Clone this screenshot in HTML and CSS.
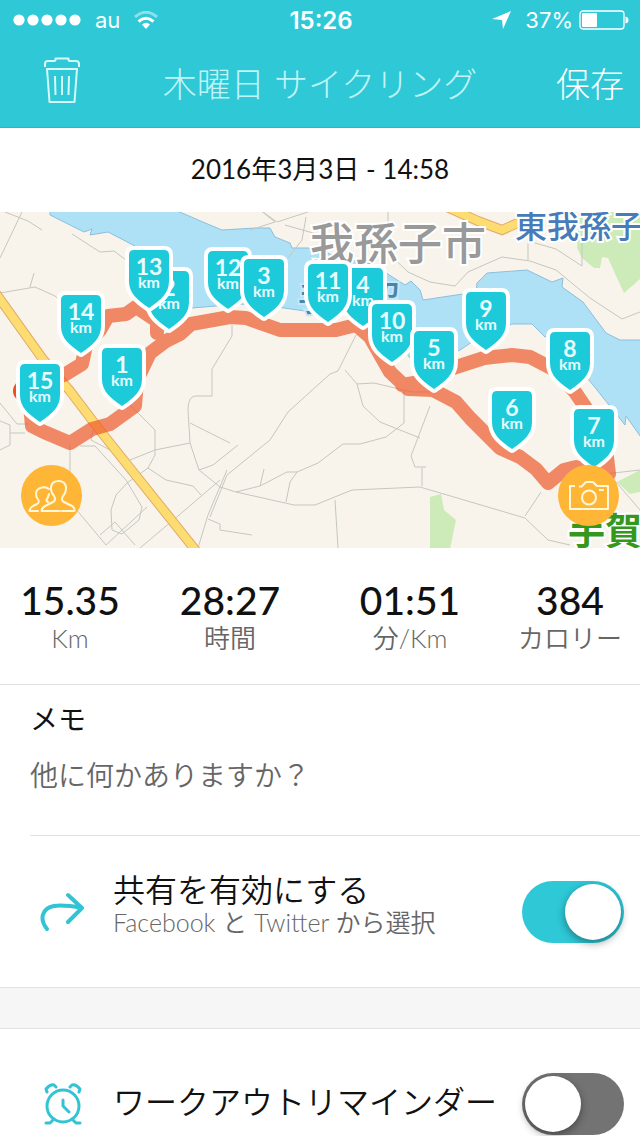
FILE: index.html
```html
<!DOCTYPE html>
<html lang="ja">
<head>
    <meta charset="utf-8">
    <meta name="viewport" content="width=device-width, initial-scale=1">
    <title>木曜日 サイクリング</title>
    <link rel="stylesheet" href="styles.css">
</head>
<body>
    <header class="header">
        <div class="status-bar">
            <div class="status-left">
                <svg width="68" height="12" viewBox="0 0 68 12" fill="#fff" aria-hidden="true">
                    <circle cx="6" cy="6" r="5.6"/><circle cx="20" cy="6" r="5.6"/><circle cx="34" cy="6" r="5.6"/><circle cx="48" cy="6" r="5.6"/><circle cx="62" cy="6" r="5.6"/>
                </svg>
                <span class="carrier">au</span>
                <svg width="24" height="18" viewBox="0 0 24 18" fill="none" stroke="#fff" stroke-width="3" aria-hidden="true">
                    <path d="M1 6Q12-3.500 23 6" stroke-opacity=".45"/>
                    <path d="M4.500 10.500Q12 4 19.500 10.500"/>
                    <path d="M8 13.500Q12 10 16 13.500L12 18z" fill="#fff" stroke="none"/>
                </svg>
            </div>
            <time class="clock">15:26</time>
            <div class="status-right">
                <svg width="19" height="18" viewBox="0 0 19 18" fill="#fff" aria-hidden="true"><path d="M19 0L11 18L10 9L0 8z"/></svg>
                <span class="percent">37%</span>
                <svg width="50" height="20" viewBox="0 0 50 20" aria-hidden="true">
                    <rect x="1" y="1" width="44" height="18" rx="3" fill="none" stroke="#fff" stroke-width="1.300"/>
                    <rect x="3" y="3" width="15" height="14" rx="1" fill="#fff"/>
                    <path d="M46.500 6.500Q49.500 7 49.500 10T46.500 13.500z" fill="#fff"/>
                </svg>
            </div>
        </div>
        <nav class="nav-bar">
            <button type="button" class="trash-btn" aria-label="削除">
                <svg width="38" height="48" viewBox="0 0 38 48" fill="none" stroke="#d5fafa" stroke-width="2" stroke-linejoin="round">
                    <path d="M2 10V7Q2 4 5 4H11Q12.500 4 12.500 2.500V1.500H25.500V2.500Q25.500 4 27 4H33Q36 4 36 7V10"/>
                    <path d="M3 12H35M4 12L6.500 45H31.500L34 12"/>
                    <path d="M12 19L12.500 38M19 19V38M26 19L25.500 38"/>
                </svg>
            </button>
            <h1 class="title">木曜日 サイクリング</h1>
            <button type="button" class="save-btn">保存</button>
        </nav>
    </header>

    <main>
        <p class="date">2016年3月3日 - 14:58</p>

        <section class="map">
            <svg class="map-canvas" viewBox="0 212 640 336" preserveAspectRatio="xMidYMid slice" role="img" aria-label="ルートマップ">
                <defs>
                    <path id="pin" d="M-15 0H15Q20 0 20 5V31C20 43 12 50 0 58C-12 50-20 43-20 31V5Q-20 0-15 0z"/>
                </defs>

                <!-- water and parks -->
                <path class="water" d="M50 205V215L84 232L92 229L90 235L108 232L135 246L165 285L192 308L240 304L277 307L305 311L350 312L385 325L410 358L440 360L460 350L475 340L512 324H532L545 337L555 335L585 375L625 425L626 416L650 450V340H620L606 333L583 302L562 287L563 278L552 282L527 270L487 273L477 283L476 292L423 300L420 290L411 281L405 285L372 264L340 258L315 248H292L290 243L275 237L270 228H255L222 230L210 225L175 210z"/>
                <path class="park" d="M580 205L577 248L582 258L594 268L600 268L602 257L608 258L617 278L624 293L640 279V205z"/>
                <path class="park" d="M430 497L441 494L444 510L456 520L450 549H430zM617 482L640 470V492L630 494z"/>

                <!-- minor roads -->
                <g class="road">
                    <path d="M5 212L28 221L42 230M22 212L0 258M0 293L35 287L55 296L65 305M30 287L34 273M72 234L100 252L114 251L126 260"/>
                    <path d="M260 210L275 222L250 230M263 212L277 222L320 208M306 217L302 240L288 258M285 225L320 235M388 210V225M385 250L408 272L430 282L455 286L468 272L502 257L530 261L556 270L590 298L622 319L640 312M528 238V260M528 241L556 249L582 266V240"/>
                    <path d="M232 325V336L212 369V396M330 374L288 412L270 440L227 475L210 517M356 335L338 371L330 374M345 370L357 384L363 406L380 422L420 438M357 384L374 383L412 392H434M404 390V423L386 437L360 444H343L318 463L297 472H287L260 486L236 492M297 472L290 482L286 502M264 469L260 486"/>
                    <path d="M220 487L236 492L294 505H315L352 490L420 487L525 518L548 540L570 545M335 500L338 548M430 406L411 456L415 467H426M422 468V486M525 516L541 492M596 475L640 470M610 475L640 510"/>
                    <path d="M0 403L17 424H28M0 421L10 425V445L0 450M10 433H25M70 445V502L106 545L147 507M80 446H95L126 480L142 507L139 520L122 534L112 530L111 510L116 495L127 483L148 468M93 430L91 440L110 450M130 460L155 450L190 443M130 405L155 430V455L148 468L166 480L193 486L201 495M212 396H195Q188 397 188 410L190 443L199 470L213 465L238 445M190 423L230 443M199 470L220 487M220 480L185 510L140 548M100 535L115 522L135 545M227 470L208 515L198 548M208 519L220 524V530L252 535"/>
                </g>

                <path class="highway-edge" d="M-8 288L42 358L70 391L98 428L197 552"/>
                <path class="highway" d="M-8 288L42 358L70 391L98 428L197 552"/>
                <path class="highway-edge" d="M440 204L478 221L502 230L520 222L550 208"/>
                <path class="highway" d="M440 204L478 221L502 230L520 222L550 208"/>

                <!-- place names -->
                <text class="place place-city" x="310" y="260">我孫子市</text>
                <text class="place place-town" x="515" y="238">東我孫子</text>
                <text class="place place-lake" x="298" y="311">手賀沼</text>
                <text class="place place-park" x="568" y="545">手賀</text>

                <!-- ride track -->
                <circle cx="24" cy="391" r="11" fill="#ee4f20"/>
                <path class="track" d="M30 405L32 426L44 432L70 443L92 429L110 424L135 406L137 380L150 353L166 341L180 334L191 324L230 317L246 318L280 330H336L356 325L370 337L390 372L408 389L433 390L456 402L470 418L500 448L520 457L536 469L548 483L564 470L576 467L609 474L607 457L594 420L575 392L555 370L530 357L512 355L484 358L450 369L420 382L402 385M157 333V321L136 307L126 314L108 316L100 330L86 345L82 364L64 375L38 385L30 405"/>

                <!-- kilometre markers -->
                <g class="pin" transform="translate(169 271)"><use href="#pin"/><text class="pin-num" y="25">2</text><text class="pin-unit" y="38">km</text></g>
                <g class="pin" transform="translate(149 250)"><use href="#pin"/><text class="pin-num" y="25">13</text><text class="pin-unit" y="38">km</text></g>
                <g class="pin" transform="translate(228 251)"><use href="#pin"/><text class="pin-num" y="25">12</text><text class="pin-unit" y="38">km</text></g>
                <g class="pin" transform="translate(264 259)"><use href="#pin"/><text class="pin-num" y="25">3</text><text class="pin-unit" y="38">km</text></g>
                <g class="pin" transform="translate(363 268)"><use href="#pin"/><text class="pin-num" y="25">4</text><text class="pin-unit" y="38">km</text></g>
                <g class="pin" transform="translate(328 264)"><use href="#pin"/><text class="pin-num" y="25">11</text><text class="pin-unit" y="38">km</text></g>
                <g class="pin" transform="translate(81 295)"><use href="#pin"/><text class="pin-num" y="25">14</text><text class="pin-unit" y="38">km</text></g>
                <g class="pin" transform="translate(486 292)"><use href="#pin"/><text class="pin-num" y="25">9</text><text class="pin-unit" y="38">km</text></g>
                <g class="pin" transform="translate(392 304)"><use href="#pin"/><text class="pin-num" y="25">10</text><text class="pin-unit" y="38">km</text></g>
                <g class="pin" transform="translate(434 331)"><use href="#pin"/><text class="pin-num" y="25">5</text><text class="pin-unit" y="38">km</text></g>
                <g class="pin" transform="translate(570 332)"><use href="#pin"/><text class="pin-num" y="25">8</text><text class="pin-unit" y="38">km</text></g>
                <g class="pin" transform="translate(122 348)"><use href="#pin"/><text class="pin-num" y="25">1</text><text class="pin-unit" y="38">km</text></g>
                <g class="pin" transform="translate(40 364)"><use href="#pin"/><text class="pin-num" y="25">15</text><text class="pin-unit" y="38">km</text></g>
                <g class="pin" transform="translate(512 391)"><use href="#pin"/><text class="pin-num" y="25">6</text><text class="pin-unit" y="38">km</text></g>
                <g class="pin" transform="translate(594 409)"><use href="#pin"/><text class="pin-num" y="25">7</text><text class="pin-unit" y="38">km</text></g>
            </svg>
            <button type="button" class="map-btn friends-btn" aria-label="友達">
                <svg width="48" height="34" viewBox="0 0 48 34" fill="none" stroke="#fff8d8" stroke-width="2" stroke-linecap="round" stroke-linejoin="round">
                    <path d="M34 32H46.500Q47 28 42 26L35 22.500Q33 20 35 17Q38.500 13 38 8Q37 2 30.500 2T23 8Q22.500 13 26 17Q28 20 26 22.500L19 26Q14 28 13.500 32H32"/>
                    <path d="M21 10Q18 7.500 14 8.500Q8 9.500 8 15Q8 18 10 20.500Q12 23 9 25L5 27Q1.500 29 1.500 32H10M21 15Q20 19 18.500 20.500Q18 22 20 23"/>
                </svg>
            </button>
            <button type="button" class="map-btn camera-btn" aria-label="写真を追加">
                <svg width="42" height="32" viewBox="0 0 42 32" fill="none" stroke="#fff8d8" stroke-width="2" stroke-linejoin="round">
                    <path d="M7 6H2V29H40V6H29L25 2H18L13.500 6.500H11"/>
                    <circle cx="21" cy="17.500" r="7"/>
                    <path d="M31 10H36"/>
                </svg>
            </button>
        </section>

        <dl class="stats">
            <div class="stat"><dd>15.35</dd><dt>Km</dt></div>
            <div class="stat"><dd>28:27</dd><dt>時間</dt></div>
            <div class="stat"><dd>01:51</dd><dt>分/Km</dt></div>
            <div class="stat"><dd>384</dd><dt>カロリー</dt></div>
        </dl>

        <section class="memo">
            <label for="memo">メモ</label>
            <textarea id="memo" rows="1" placeholder="他に何かありますか？"></textarea>
        </section>

        <section class="row row-share">
            <svg class="row-icon" width="46" height="40" viewBox="0 0 46 40" fill="none" stroke="#33c4d3" stroke-width="4" stroke-linecap="round" stroke-linejoin="round" aria-hidden="true">
                <path d="M8 37C0 27 3 16 15 14C22 13 32 14 43 16M29 3L43 16L29 30"/>
            </svg>
            <label class="row-text" for="share">
                <span class="row-title">共有を有効にする</span>
                <span class="row-sub">Facebook と Twitter から選択</span>
            </label>
            <input type="checkbox" class="switch" id="share" checked>
        </section>

        <div class="divider"></div>

        <section class="row row-reminder">
            <svg class="row-icon" width="46" height="42" viewBox="0 0 46 42" fill="none" stroke="#33c4d3" stroke-width="3" stroke-linecap="round" stroke-linejoin="round" aria-hidden="true">
                <circle cx="24" cy="23" r="16"/>
                <path d="M24 17V23L30 29M15 36L11 40H7M33 36L37 40H41M8 9L7 6Q11 1 15 2L17 4M40 9L41 6Q37 1 33 2L31 4"/>
            </svg>
            <label class="row-text" for="reminder">
                <span class="row-title">ワークアウトリマインダー</span>
            </label>
            <input type="checkbox" class="switch" id="reminder">
        </section>
    </main>
</body>
</html>
```

FILE: styles.css
```css
* {
    box-sizing: border-box;
}
body {
    margin: 0;
    background-color: #ffffff;
    color: #111111;
    font-family: Lato, "Noto Sans CJK JP", sans-serif;
    font-weight: 350;
}
button {
    padding: 0;
    border: none;
    background: none;
    font-family: inherit;
    cursor: pointer;
}
svg {
    display: block;
}

/* header */
.header {
    background-color: #2ec8d7;
    color: #ffffff;
    border-bottom: 1px solid #22b9c9;
}
.status-bar {
    display: grid;
    grid-template-columns: 1fr auto 1fr;
    align-items: center;
    height: 40px;
    padding: 0 11px 0 13px;
    font-family: Inter, sans-serif;
    font-size: 22px;
    font-weight: 400;
}
.status-left,
.status-right {
    display: flex;
    align-items: center;
}
.status-left {
    gap: 14px;
}
.status-right {
    justify-content: flex-end;
    gap: 6px;
}
.percent {
    margin-left: 8px;
}
.clock {
    font-size: 24px;
    font-weight: 600;
}
.nav-bar {
    display: grid;
    grid-template-columns: 1fr auto 1fr;
    align-items: center;
    height: 87px;
    padding: 0 16px 2px 43px;
}
.trash-btn {
    justify-self: start;
    padding-bottom: 4px;
}
.title {
    margin: 0 27px 0 0;
    color: #c0f4f6;
    font-size: 34px;
    font-weight: 300;
}
.save-btn {
    justify-self: end;
    color: #ffffff;
    font-size: 34px;
    font-weight: 300;
}
.date {
    margin: 0;
    padding: 21px 0 23px;
    font-size: 26px;
    font-weight: 400;
    line-height: 40px;
    text-align: center;
}

/* map */
.map {
    position: relative;
    background-color: #f8f4ec;
}
.map-canvas {
    width: 100%;
    height: 336px;
    overflow: hidden;
}
.water {
    fill: #aee1f6;
    stroke: #8dbede;
    stroke-width: 1;
}
.park {
    fill: #cdebb9;
}
.road {
    fill: none;
    stroke: #c5c7bf;
    stroke-width: 1;
}
.highway-edge {
    fill: none;
    stroke: #e3aa68;
    stroke-width: 10;
}
.highway {
    fill: none;
    stroke: #fddc72;
    stroke-width: 8;
}
.track {
    fill: none;
    stroke: #ee5a2c;
    stroke-opacity: .7;
    stroke-width: 14;
    stroke-linejoin: round;
    stroke-linecap: round;
}
.place {
    font-family: "Noto Sans CJK JP", sans-serif;
    font-weight: 500;
    stroke: #ffffff;
    stroke-width: 4;
    paint-order: stroke;
}
.place-city {
    fill: #999999;
    font-size: 44px;
}
.place-town {
    fill: #467cb9;
    font-size: 32px;
}
.place-lake {
    fill: #4686ae;
    font-size: 34px;
    stroke: #c4e8f7;
}
.place-park {
    fill: #35981c;
    font-size: 37px;
    font-weight: 700;
}
.pin use {
    fill: #1ccada;
    stroke: #ffffff;
    stroke-width: 8;
    stroke-linejoin: round;
    paint-order: stroke;
}
.pin text {
    fill: #e8fdff;
    font-weight: 700;
    text-anchor: middle;
}
.pin-num {
    font-size: 23px;
}
.pin-unit {
    font-size: 16px;
}
.map-btn {
    position: absolute;
    bottom: 22px;
    display: flex;
    align-items: center;
    justify-content: center;
    width: 61px;
    height: 61px;
    border-radius: 50%;
    background-color: #ffb637;
}
.friends-btn {
    left: 21px;
}
.camera-btn {
    right: 21px;
}

/* stats */
.stats {
    display: grid;
    grid-template-columns: 7fr 9fr 9fr 7fr;
    margin: 0;
    padding: 32px 0 28px;
    border-bottom: 1px solid #e2e2e2;
    text-align: center;
}
.stat dd {
    margin: 0;
    font-size: 39px;
    font-weight: 500;
    line-height: 40px;
}
.stat dt {
    color: #666666;
    font-size: 26px;
    line-height: 36px;
}

/* memo */
.memo {
    display: flex;
    flex-direction: column;
    gap: 20px;
    margin-left: 30px;
    padding: 16px 16px 42px 0;
    border-bottom: 1px solid #e2e2e2;
    font-size: 28px;
    line-height: 36px;
}
.memo label {
    font-weight: 400;
}
.memo textarea {
    height: 36px;
    padding: 0;
    border: none;
    outline: none;
    resize: none;
    overflow: hidden;
    font: inherit;
}
.memo textarea::placeholder {
    color: #666666;
}

/* setting rows */
.row {
    display: flex;
    align-items: center;
    padding: 36px 16px 35px 39px;
}
.row-icon {
    flex: none;
    margin-right: 28px;
}
.row-text {
    flex: 1;
}
.row-title {
    display: block;
    font-size: 32px;
    line-height: 36px;
}
.row-sub {
    display: block;
    color: #666666;
    font-size: 25px;
    line-height: 28px;
}
.row-share .row-text {
    padding-bottom: 16px;
}
.row-reminder {
    padding-top: 44px;
    padding-bottom: 1px;
}
.row-reminder .row-text {
    padding-bottom: 4px;
}
.divider {
    height: 42px;
    border-top: 1px solid #e2e2e2;
    border-bottom: 1px solid #e2e2e2;
    background-color: #f6f6f6;
}
.switch {
    flex: none;
    appearance: none;
    display: flex;
    width: 102px;
    height: 62px;
    margin: 0;
    padding: 3px;
    border-radius: 31px;
    background-color: #737373;
    cursor: pointer;
}
.switch::before {
    content: "";
    width: 56px;
    height: 56px;
    border-radius: 50%;
    background-color: #ffffff;
    box-shadow: 0 3px 8px rgba(0, 0, 0, 0.4);
}
.switch:checked {
    justify-content: flex-end;
    background-color: #2ec8d7;
}
```
